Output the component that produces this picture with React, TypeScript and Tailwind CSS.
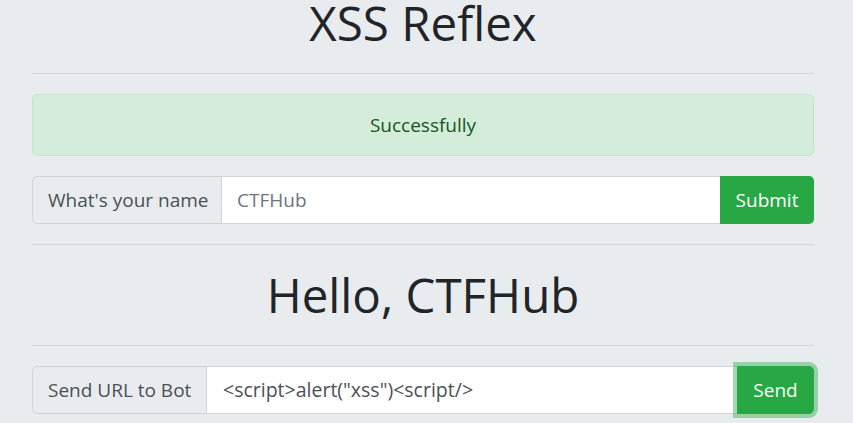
import React from "react";

export default function App() {
  const font = { fontFamily: '"Open Sans", "Noto Sans", sans-serif' };
  return (
    <div className="min-h-[423px] w-full overflow-hidden bg-[#e9ecef] text-[#212529]" style={font}>
      <div className="flex flex-col pl-[32px] pr-[39px]">
        <h1 className="text-center text-[47.5px] font-normal leading-[46px] text-[#212529]">XSS Reflex</h1>
        <hr className="mt-[27px] border-0 border-t border-[#d2d4d7]" />
        <div className="mt-[20px] flex h-[62px] items-center justify-center rounded-[5px] border border-[#c3e6cb] bg-[#d4edda] text-[19px] text-[#155724]">
          Successfully
        </div>
        <div className="mt-[20px] flex h-[48px]">
          <div className="flex w-[190px] flex-none items-center whitespace-nowrap rounded-l-[5px] border border-[#ced4da] bg-[#e9ecef] px-[15px] text-[19px] text-[#495057]">
            What's your name
          </div>
          <div className="flex min-w-0 flex-1 items-center border-y border-[#ced4da] bg-white px-[15px] text-[19px] text-[#6c757d]">
            CTFHub
          </div>
          <div className="flex w-[94px] flex-none items-center justify-center rounded-r-[5px] bg-[#28a745] text-[19px] text-white">
            Submit
          </div>
        </div>
        <hr className="mt-[20px] border-0 border-t border-[#d2d4d7]" />
        <h1 className="mt-[20px] text-center text-[47.5px] font-normal leading-[60px] text-[#212529]">Hello, CTFHub</h1>
        <hr className="mt-[20px] border-0 border-t border-[#d2d4d7]" />
        <div className="mt-[20px] flex h-[48px]">
          <div className="flex w-[175px] flex-none items-center whitespace-nowrap rounded-l-[5px] border border-[#ced4da] bg-[#e9ecef] px-[15px] text-[19px] text-[#495057]">
            Send URL to Bot
          </div>
          <div className="flex min-w-0 flex-1 items-center whitespace-nowrap border-y border-[#ced4da] bg-white px-[16px] text-[19.5px] text-[#495057]">
            {'<script>alert("xss")<script/>'}
          </div>
          <div className="flex w-[77px] flex-none items-center justify-center rounded-r-[5px] border border-[#28a745] bg-[#28a745] text-[19px] text-white shadow-[0_0_0_4px_rgba(72,180,97,0.5)]">
            Send
          </div>
        </div>
      </div>
    </div>
  );
}
